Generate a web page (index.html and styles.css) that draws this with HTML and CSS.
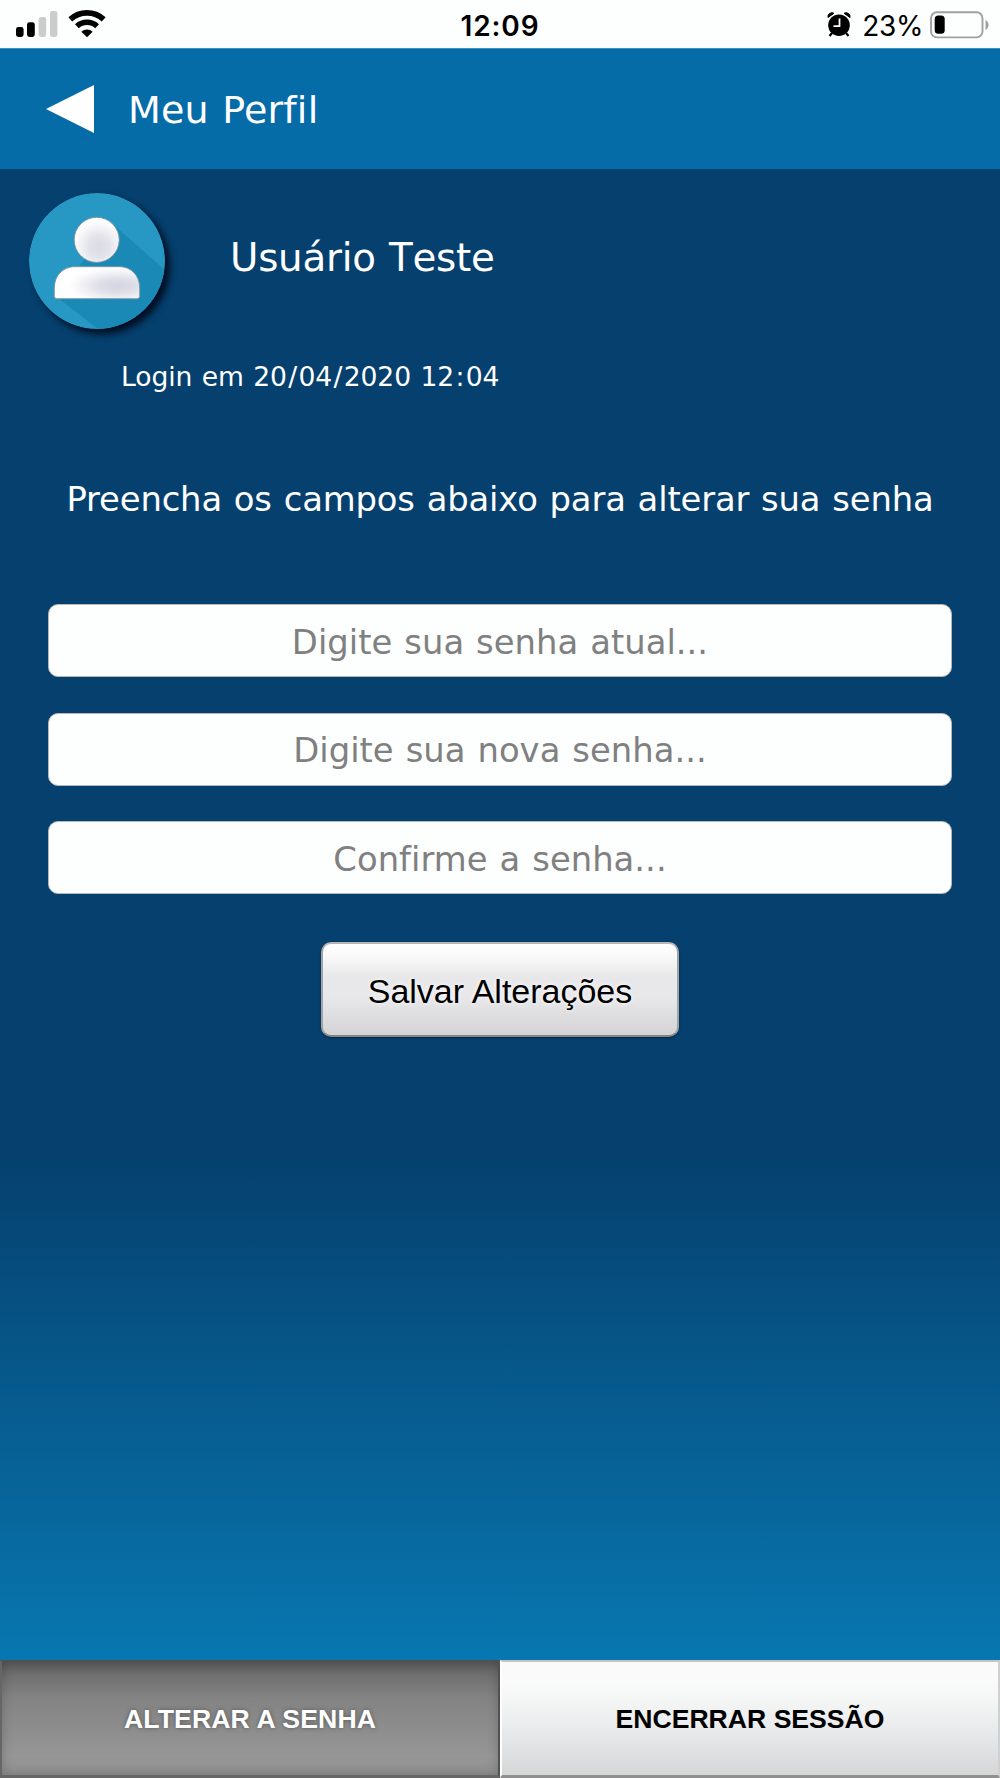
FILE: index.html
```html
<!DOCTYPE html>
<html lang="pt-BR">
<head>
<meta charset="utf-8">
<title>Meu Perfil</title>
<link rel="stylesheet" href="styles.css">
</head>
<body>
<div class="status">
  <div class="status-left">
    <svg class="signal" width="42" height="26" viewBox="0 0 42 26">
      <rect x="0" y="16" width="7.6" height="10" rx="2.4" fill="#000"/>
      <rect x="11" y="11.3" width="7.8" height="14.7" rx="2.4" fill="#000"/>
      <rect x="22.6" y="6" width="7.6" height="20" rx="2.4" fill="#ccc"/>
      <rect x="34" y="0" width="7.4" height="26" rx="2.4" fill="#ccc"/>
    </svg>
    <svg class="wifi" width="38" height="28" viewBox="0 0 38 28" fill="none" stroke="#000">
      <path d="M2.300 9.400 A24.500 24.500 0 0 1 35.700 9.400" stroke-width="5.600"/>
      <path d="M8.900 16.200 A15 15 0 0 1 29.100 16.200" stroke-width="5.600"/>
      <path d="M19 27.300 L13.300 21.700 A8.200 8.200 0 0 1 24.700 21.700 Z" fill="#000" stroke="none"/>
    </svg>
  </div>
  <div class="status-time">12:09</div>
  <div class="status-right">
    <svg class="alarm" width="24" height="26" viewBox="0 0 24 26">
      <circle cx="12" cy="13.200" r="10.800"/>
      <path d="M1 5.500 A4 4 0 0 1 7 1.300 Z M23 5.500 A4 4 0 0 0 17 1.300 Z" stroke="#000"/>
      <path d="M5 21 L2.500 24 M19 21 L21.500 24" stroke="#000" stroke-width="2.200"/>
      <path d="M12.500 6.500 V14.200 H6.500" fill="none" stroke="#fff" stroke-width="1.800"/>
    </svg>
    <span class="percent">23%</span>
    <svg class="battery" width="60" height="28" viewBox="0 0 60 28">
      <rect x="1" y="1.200" width="51.500" height="25.200" rx="6" fill="none" stroke="#a0a0a0" stroke-width="1.900"/>
      <rect x="4.700" y="4.600" width="10" height="18.200" rx="3.600"/>
      <path d="M55.500 9 C59.600 11.500 59.600 16.500 55.500 19 Z" fill="#a0a0a0"/>
    </svg>
  </div>
</div>

<header class="header">
  <svg class="back" width="48" height="48" viewBox="0 0 48 48"><path d="M0 24 L48 0 V48 Z" fill="#fff"/></svg>
  <h1 class="title">Meu Perfil</h1>
</header>

<main class="content">
  <section class="profile">
    <svg class="avatar" width="136" height="136" viewBox="0 0 137 137">
      <defs>
        <clipPath id="disc"><circle cx="68.500" cy="68.500" r="68.500"/></clipPath>
        <radialGradient id="head" cx=".55" cy=".65" r=".6">
          <stop offset="0" stop-color="#dadae4"/><stop offset=".4" stop-color="#e3e3eb"/><stop offset=".85" stop-color="#fafafc"/><stop offset="1" stop-color="#fff"/>
        </radialGradient>
        <radialGradient id="torso" cx=".74" cy=".6" r=".6">
          <stop offset="0" stop-color="#d5d5e2"/><stop offset=".35" stop-color="#dedee8"/><stop offset=".85" stop-color="#fafafc"/><stop offset="1" stop-color="#fff"/>
        </radialGradient>
      </defs>
      <g clip-path="url(#disc)">
        <rect width="137" height="137" fill="#2798c4"/>
        <path d="M84 31 L137 77.500 V137 H69.500 L27 104 Z" fill="#1a89b6"/>
      </g>
      <circle cx="68.200" cy="47.200" r="22.700" fill="url(#head)" stroke="#78949f" stroke-width=".9"/>
      <path d="M25.500 104 V96 C25.500 83 34 74.200 46 74.200 H91 C103 74.200 111.500 83 111.500 96 V104 Q111.500 106.500 109 106.500 H28 Q25.500 106.500 25.500 104 Z" fill="url(#torso)" stroke="#78949f" stroke-width=".9"/>
    </svg>
    <div class="name">Usuário Teste</div>
  </section>
  <p class="login">Login em 20<span class="sep">/</span>04<span class="sep">/</span>2020 12<span class="sep">:</span>04</p>
  <p class="hint">Preencha os campos abaixo para alterar sua senha</p>
  <form class="form">
    <input class="field" type="password" placeholder="Digite sua senha atual...">
    <input class="field" type="password" placeholder="Digite sua nova senha...">
    <input class="field" type="password" placeholder="Confirme a senha...">
    <button class="save" type="button">Salvar Alterações</button>
  </form>
</main>

<nav class="tabs">
  <button class="tab tab-active" type="button">ALTERAR A SENHA</button>
  <button class="tab" type="button">ENCERRAR SESSÃO</button>
</nav>
</body>
</html>
```
FILE: styles.css
```css
* { box-sizing: border-box; }

body {
  margin: 0;
  height: 1778px;
  display: flex;
  flex-direction: column;
  overflow: hidden;
  color: #fff;
  font-family: "DejaVu Sans", sans-serif;
  background: linear-gradient(#05406e 0, #05406e 1156px, #0877b0 1660px);
}

svg { display: block; flex: none; }

.status {
  height: 48px;
  flex: none;
  display: grid;
  grid-template-columns: 1fr auto 1fr;
  background: #fdfefe;
  color: #000;
  font-family: Inter, sans-serif;
  line-height: 52px;
}
.status-left { display: flex; gap: 10px; padding: 10px 0 0 16px; }
.signal { margin-top: 1px; }
.status-time { font-size: 28px; font-weight: 600; letter-spacing: 0.9px; }
.status-right { display: flex; justify-content: flex-end; padding-right: 15px; }
.alarm { margin: 12px 11px 0 0; }
.percent { font-size: 28px; letter-spacing: -0.4px; margin-right: 7px; }
.battery { margin: 11px -5px 0 0; }

.header {
  height: 121px;
  flex: none;
  display: flex;
  align-items: center;
  gap: 34px;
  padding-left: 46px;
  background: #066ca8;
  border-top: 1px solid #3f90bc;
}
.title {
  margin: 0;
  padding-top: 2px;
  font-size: 38px;
  font-weight: 400;
  letter-spacing: 0.2px;
  word-spacing: 1px;
}

.content { flex: 1; }
.profile {
  display: flex;
  align-items: flex-start;
  gap: 65px;
  height: 161px;
  padding: 24px 0 0 29px;
}
.avatar { border-radius: 50%; box-shadow: 5px 5px 7px rgba(0, 5, 20, 0.85); }
.name {
  padding-top: 45px;
  font-size: 38.8px;
  line-height: 40px;
  letter-spacing: -0.25px;
  word-spacing: 1.2px;
  font-kerning: none;
}
.login {
  margin: 32px 0 0 121px;
  font-size: 26.6px;
  line-height: 30px;
  letter-spacing: -0.08px;
  word-spacing: 1px;
}
.sep { padding: 0 0.05em; }
.hint {
  margin: 88px 0 0;
  text-align: center;
  font-size: 33.8px;
  line-height: 40px;
  letter-spacing: -0.15px;
  word-spacing: 1.3px;
}

.form { display: flex; flex-direction: column; padding: 84px 48px 0; }
.field {
  height: 73px;
  margin-bottom: 35.6px;
  padding: 3px 0 0;
  border: 1px solid #b5b9bb;
  border-radius: 10px;
  background: #fdfefe;
  text-align: center;
  font: 33.8px "DejaVu Sans", sans-serif;
  letter-spacing: 0.03px;
  word-spacing: 1.2px;
}
.field::placeholder { color: #808080; opacity: 1; }
.save {
  align-self: center;
  width: 358px;
  height: 95px;
  margin-top: 12px;
  padding: 5px 0 0;
  border: 2px solid #999;
  border-color: #b9b4b5 #a3a3a3 #858585;
  border-radius: 10px;
  background: linear-gradient(#fff 0, #fafafa 12%, #e8e8ea 36%, #e8e8ea 58%, #d4d4d6 100%);
  box-shadow: 0 1px 2px rgba(0, 0, 0, 0.4);
  color: #000;
  font: 34px "Liberation Sans", sans-serif;
  text-shadow: 0 0 4px #fff;
}

.tabs { display: flex; height: 118px; flex: none; }
.tab {
  flex: 1;
  padding: 2px 0 0;
  border: solid #919191;
  border-width: 2px 2px 3px;
  border-color: #c5c3c6 #d0d0d0 #8f8f8f #fff;
  background: linear-gradient(#fafafa 0, #fafafa 15%, #f5f7f6 32%, #e9eaec 60%, #dcdddf 86%, #d5d6d5 100%);
  color: #000;
  font: bold 26.6px "Liberation Sans", sans-serif;
}
.tab-active {
  border-color: #515151 #515151 #666 #666;
  background: linear-gradient(#5b5b5b 0, #727272 14%, #838383 32%, #8c8c8c 56%, #969696 84%, #909090 100%);
  box-shadow: inset 0 0 12px rgba(0, 0, 0, 0.2);
  color: #fff;
  letter-spacing: 0.13px;
  text-shadow: 0 0 4px #555;
}
```
